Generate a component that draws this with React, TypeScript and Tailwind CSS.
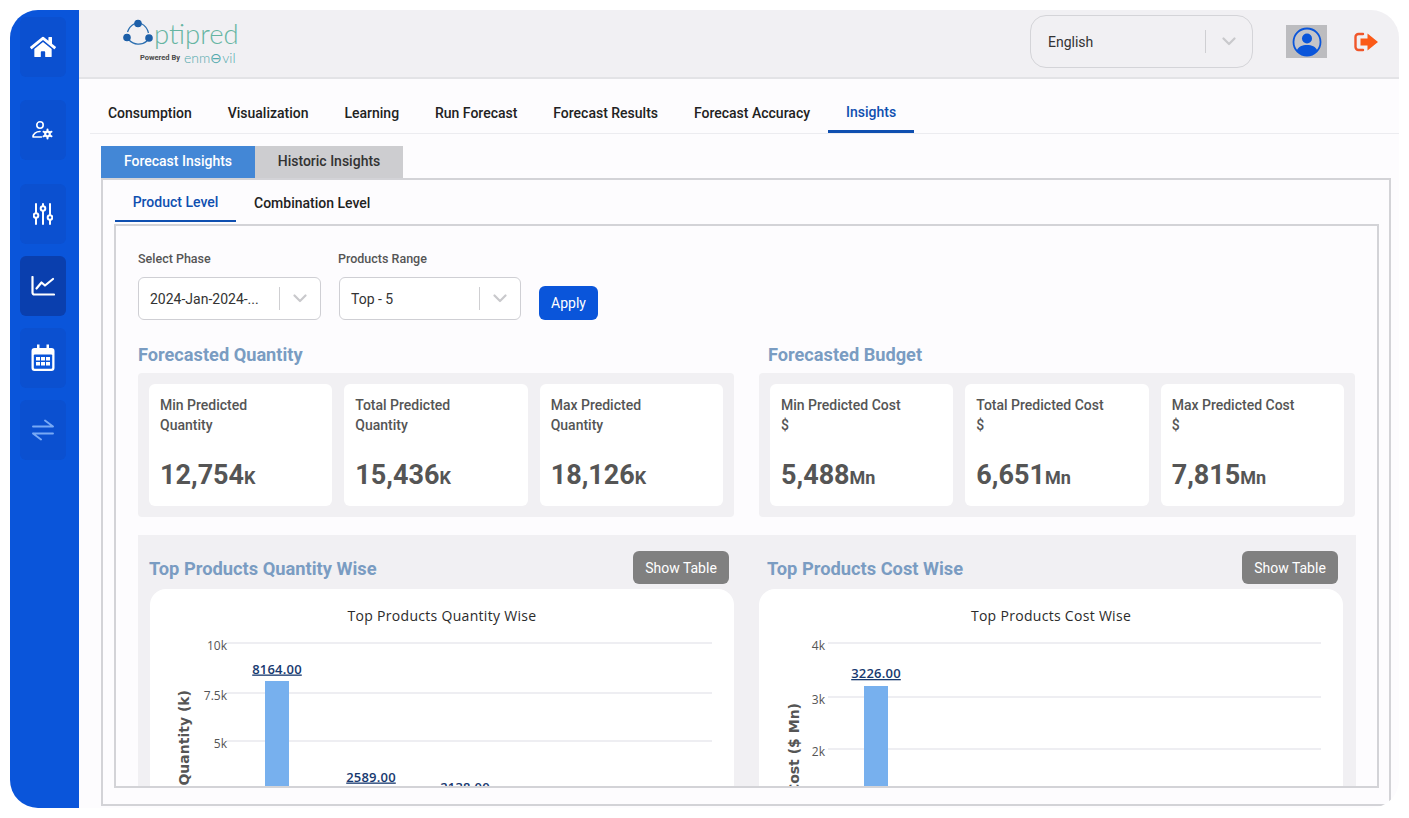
import React from "react";
import { FaHome } from "react-icons/fa";

const IconUserGear = () => (
  <svg width="22" height="19" viewBox="0 0 22 19" fill="none" stroke="white" strokeWidth="1.6" strokeLinecap="round">
    <circle cx="8" cy="4" r="3.2" />
    <path d="M1 16h8.500M1 16c0-3.200 3-5.500 7-5.500" />
    <circle cx="15.500" cy="13" r="2.300" strokeWidth="2.200" />
    <path d="M15.500 8.400v1M15.500 16.600v1M11.500 10.700l.9.500M18.600 14.800l.9.500M11.500 15.300l.9-.5M18.600 11.200l.9-.5" strokeWidth="2" />
  </svg>
);
const IconSliders = () => (
  <svg width="20" height="22" viewBox="0 0 20 22" fill="none" stroke="white" strokeWidth="2" strokeLinecap="round">
    <path d="M3 1v9M3 15v6M10 1v2M10 8v13M17 1v11M17 17v4" />
    <circle cx="3" cy="12.500" r="2.300" />
    <circle cx="10" cy="5.500" r="2.300" />
    <circle cx="17" cy="14.500" r="2.300" />
  </svg>
);
const IconChart = () => (
  <svg width="24" height="20" viewBox="0 0 24 20" fill="none" stroke="white" strokeWidth="2.200" strokeLinecap="round" strokeLinejoin="round">
    <path d="M1.500 1v15.500a2 2 0 0 0 2 2H23" />
    <path d="M5.500 12.500l5-6 3.500 3 8-6.500" />
  </svg>
);
const IconCalendar = () => (
  <svg width="24" height="28" viewBox="0 0 24 28">
    <path d="M6 0.500h2.500v3.500H15.500V0.500H18v3.500h2.500A3 3 0 0 1 23.500 7v17a3 3 0 0 1-3 3h-17a3 3 0 0 1-3-3V7a3 3 0 0 1 3-3H6z" fill="white" />
    <rect x="2.800" y="10.500" width="18.400" height="14.200" rx="1" fill="#0a55da" />
    {[5, 10, 15].flatMap((x) => [13, 18].map((y) => <rect key={x + "-" + y} x={x} y={y} width="4" height="3.500" fill="white" />))}
  </svg>
);
const IconSwap = () => (
  <svg width="22" height="22" viewBox="0 0 22 22" fill="none" stroke="#78a9f5" strokeWidth="1.900" strokeLinecap="round" strokeLinejoin="round">
    <path d="M1 7.500h20M13 1.500L21 7.500M21 14.500H1M9 20.500L1 14.500" />
  </svg>
);
const IconProfile = () => (
  <svg width="30" height="30" viewBox="0 0 30 30">
    <circle cx="15" cy="15" r="13.500" fill="#c4c4c8" stroke="#0a55da" strokeWidth="1.800" />
    <circle cx="15" cy="11.500" r="5" fill="#0a55da" />
    <path d="M4.800 23.500c1.500-4 5.500-5.500 10.200-5.500s8.700 1.500 10.200 5.500A13 13 0 0 1 15 28.500a13 13 0 0 1-10.200-5z" fill="#0a55da" />
  </svg>
);
const IconExit = () => (
  <svg width="26" height="22" viewBox="0 0 26 22">
    <path d="M10 3H5.500A3 3 0 0 0 2.500 6v10a3 3 0 0 0 3 3H10" fill="none" stroke="#f0562a" strokeWidth="2.400" strokeLinecap="round" />
    <path d="M7.500 7.500h7V2.500L25 11 14.500 19.500v-5h-7z" fill="#fb5a17" />
  </svg>
);
const Chevron = () => (
  <svg width="14" height="9" viewBox="0 0 14 9" fill="none" stroke="#c9c9cc" strokeWidth="2.200" strokeLinecap="round" strokeLinejoin="round">
    <path d="M1.500 1.500L7 7l5.500-5.500" />
  </svg>
);

const Logo = () => (
  <div className="flex w-[113px] flex-col">
    <div className="flex h-[30px] items-center">
      <svg width="31" height="28" viewBox="0 0 31 28" className="mb-[3px] shrink-0">
        <path d="M12 4.500A14 14 0 0 0 4.500 13M18 4.500A14 14 0 0 1 25.500 14M6 21A13 13 0 0 0 24 22" fill="none" stroke="#2c6fb0" strokeWidth="1.300" />
        <circle cx="15" cy="4.500" r="3.800" fill="#1d5fa8" />
        <circle cx="4" cy="18.500" r="3.800" fill="#1d5fa8" />
        <circle cx="26" cy="19" r="3.800" fill="#1d5fa8" />
      </svg>
      <span className="text-[27.500px] leading-[30px] font-light text-[#66b5a2] [font-family:Lato,sans-serif]">ptipred</span>
    </div>
    <div className="mt-[2px] flex h-[13px] items-center pl-[17px]">
      <span className="w-[44px] text-[7.500px] leading-3 font-bold whitespace-nowrap text-[#4a4a4a]">Powered By</span>
      <span className="text-[14px] leading-[13px] font-light text-[#52a9ad] [font-family:Lato,sans-serif]">enm⊖vil</span>
    </div>
  </div>
);

const NavItem = ({ children, active, cls }: { children: React.ReactNode; active?: boolean; cls: string }) => (
  <div className={`flex h-[60px] w-[46px] items-center justify-center rounded-md ${active ? "bg-[#0a3fae]" : "bg-[#0b50d0]"} ${cls}`}>{children}</div>
);

const Select = ({ value, w }: { value: string; w: string }) => (
  <div className={`flex h-[43px] items-center rounded-md border border-[#cfcfd4] bg-white pl-[11px] ${w}`}>
    <span className="flex-1 text-sm whitespace-nowrap text-[#333]">{value}</span>
    <span className="h-[23px] w-px bg-[#cfcfd2]" />
    <span className="flex w-[40px] justify-center"><Chevron /></span>
  </div>
);

const Stat = ({ l1, l2, value, unit }: { l1: string; l2: string; value: string; unit: string }) => (
  <div className="flex h-[122px] flex-1 flex-col rounded-md bg-white px-[11px] pt-[11px]">
    <div className="text-sm leading-5 font-medium text-[#555]">{l1}<br />{l2}</div>
    <div className="mt-[22px] flex items-baseline text-[#555]">
      <span className="text-[27px] leading-[36px] font-bold">{value}</span>
      <span className="text-lg leading-6 font-bold">{unit}</span>
    </div>
  </div>
);

const svgFont = "'Open Sans', sans-serif";

const Chart = ({ title, ticks, grid, x2, axis, axisX, axisY, bars, x1, tickX }: {
  title: string; ticks: string[]; grid: number[]; x1: number; x2: number; axis: string; axisX: number; axisY: number; tickX: number;
  bars: { x: number; top: number; label: string; ly: number }[];
}) => (
  <svg width="584" height="320" viewBox="0 0 584 320" className="block">
    <text x="292" y="32" textAnchor="middle" fontFamily={svgFont} fontSize="14" letterSpacing="0.3" fill="#2b2b2b">{title}</text>
    {grid.map((y, i) => (
      <g key={y}>
        <line x1={x1} x2={x2} y1={y} y2={y} stroke="#e9e9ee" strokeWidth="1.500" />
        <text x={tickX} y={y + 6.5} textAnchor="end" fontFamily={svgFont} fontSize="12" fill="#555">{ticks[i]}</text>
      </g>
    ))}
    <text transform={`translate(${axisX} ${axisY}) rotate(-90)`} textAnchor="end" fontFamily="'DejaVu Sans', sans-serif" fontWeight="700" fontSize="14" fill="#555">{axis}</text>
    {bars.map((b) => (
      <g key={b.label}>
        <rect x={b.x} y={b.top} width="24" height={320 - b.top} fill="#77b0ee" />
        <text x={b.x + 12} y={b.ly} textAnchor="middle" fontFamily={svgFont} fontWeight="600" fontSize="13" letterSpacing="0.2" textDecoration="underline" fill="#17396f">{b.label}</text>
      </g>
    ))}
  </svg>
);

export default function App() {
  return (
    <div className="h-[818px] w-[1409px] overflow-hidden bg-white p-[10px] [font-family:Roboto,sans-serif]">
      <div className="flex h-[798px] w-[1389px] overflow-hidden rounded-[28px]">
        <aside className="flex w-[69px] shrink-0 flex-col items-start bg-[#0a55da] pt-[7px] pl-[10px]">
          <NavItem cls=""><FaHome size={26} color="white" /></NavItem>
          <NavItem cls="mt-[23px]"><IconUserGear /></NavItem>
          <NavItem cls="mt-[24px]"><IconSliders /></NavItem>
          <NavItem cls="mt-[12px]" active><IconChart /></NavItem>
          <NavItem cls="mt-[12px]"><IconCalendar /></NavItem>
          <NavItem cls="mt-[12px]"><IconSwap /></NavItem>
        </aside>
        <main className="flex min-w-0 flex-1 flex-col bg-[#fdfcfe]">
          <header className="flex h-[69px] shrink-0 items-center border-b-2 border-[#e3e3e6] bg-[#f1f0f3] pb-1">
            <div className="ml-[44px] flex-1"><Logo /></div>
            <div className="flex h-[53px] w-[223px] items-center rounded-2xl border border-[#d4d4d8] pl-[17px]">
              <span className="flex-1 text-sm text-[#333]">English</span>
              <span className="h-[23px] w-px bg-[#cfcfd2]" />
              <span className="flex w-[46px] justify-center"><Chevron /></span>
            </div>
            <div className="ml-[33px] flex h-[33px] w-[41px] items-center justify-center bg-[#bcbcbf]"><IconProfile /></div>
            <div className="mr-[20px] ml-[26px]"><IconExit /></div>
          </header>
          <nav className="ml-[11px] flex h-[55px] shrink-0 items-end border-b border-[#ececf0] text-sm font-medium text-[#222]">
            {["Consumption", "Visualization", "Learning", "Run Forecast", "Forecast Results", "Forecast Accuracy"].map((t) => (
              <div key={t} className="flex h-[39px] items-start px-[17.950px] pt-[9px] whitespace-nowrap">{t}</div>
            ))}
            <div className="flex h-[39px] items-start border-b-[3px] border-[#0f4fb0] px-[18px] pt-[8px] text-[#0f4fb0]">Insights</div>
          </nav>
          <div className="mt-3 mr-2 mb-[2px] ml-[22px] flex min-h-0 flex-1 flex-col">
            <div className="flex h-[32px] shrink-0 text-sm font-medium">
              <div className="flex w-[154px] items-center justify-center bg-[#4387d6] pb-[2px] text-white">Forecast Insights</div>
              <div className="flex w-[148px] items-center justify-center bg-[#cdcdd0] pb-[2px] text-[#333]">Historic Insights</div>
            </div>
            <div className="flex min-h-0 flex-1 flex-col border-2 border-[#d3d3d7] pr-[10px] pb-[16px] pl-[11px]">
              <div className="flex h-[42px] shrink-0 text-sm font-medium">
                <div className="ml-px flex w-[121px] items-start justify-center border-b-[2.500px] border-[#0f4fb0] pt-[12px] text-[#0f4fb0]">Product Level</div>
                <div className="pt-[13px] pl-[18px] text-[#222]">Combination Level</div>
              </div>
              <section className="mt-[2px] min-h-0 flex-1 overflow-hidden border-2 border-[#d3d3d7] pt-[25px] pr-[21px] pl-[22px]">
                <div className="flex items-end">
                  <div className="mr-[18px]">
                    <div className="mb-[10px] text-[12.500px] leading-4 font-medium text-[#555]">Select Phase</div>
                    <Select value="2024-Jan-2024-..." w="w-[183px]" />
                  </div>
                  <div className="mr-[18px]">
                    <div className="mb-[10px] ml-[-1px] text-[12.500px] leading-4 font-medium text-[#555]">Products Range</div>
                    <Select value="Top - 5" w="w-[182px]" />
                  </div>
                  <button className="h-[34px] w-[59px] rounded-md bg-[#0a55da] text-sm text-white">Apply</button>
                </div>
                <div className="mt-[23px] flex gap-[25px]">
                  {[
                    { h: "Forecasted Quantity", s: [["Min Predicted", "Quantity", "12,754", "K"], ["Total Predicted", "Quantity", "15,436", "K"], ["Max Predicted", "Quantity", "18,126", "K"]] },
                    { h: "Forecasted Budget", s: [["Min Predicted Cost", "$", "5,488", "Mn"], ["Total Predicted Cost", "$", "6,651", "Mn"], ["Max Predicted Cost", "$", "7,815", "Mn"]] },
                  ].map((g, i) => (
                    <div key={g.h} className="w-[596px]">
                      <h2 className={`mb-[6px] text-[18.200px] leading-6 font-bold text-[#7a9cc2] ${i ? "pl-[9px]" : ""}`}>{g.h}</h2>
                      <div className="flex gap-3 rounded-sm bg-[#f1f0f3] p-[11px]">
                        {g.s.map((c) => <Stat key={c[0]} l1={c[0]} l2={c[1]} value={c[2]} unit={c[3]} />)}
                      </div>
                    </div>
                  ))}
                </div>
                <div className="mt-[18px] flex gap-[25px] bg-[#f1f0f3] px-3 pt-4">
                  <div className="w-[584px]">
                    <div className="mb-[5px] flex h-[33px] items-center justify-between pr-[5px]">
                      <h2 className="mt-[3px] ml-[-1px] text-[18.300px] font-bold text-[#7a9cc2]">Top Products Quantity Wise</h2>
                      <button className="h-[33px] w-[96px] rounded-md bg-[#808080] text-sm text-white">Show Table</button>
                    </div>
                    <div className="overflow-hidden rounded-2xl bg-white">
                      <Chart title="Top Products Quantity Wise" ticks={["10k", "7.5k", "5k", "2.5k"]} grid={[54, 104, 152, 200]} x1={76} x2={562} tickX={77} axis="Quantity (k)" axisX={39} axisY={101}
                        bars={[{ x: 115, top: 92, label: "8164.00", ly: 84.5 }, { x: 209, top: 200, label: "2589.00", ly: 192.5 }, { x: 303, top: 210, label: "2138.00", ly: 202.5 }]} />
                    </div>
                  </div>
                  <div className="w-[584px]">
                    <div className="mb-[5px] flex h-[33px] items-center justify-between pr-[5px] pl-[8px]">
                      <h2 className="mt-[3px] text-[18.300px] font-bold text-[#7a9cc2]">Top Products Cost Wise</h2>
                      <button className="h-[33px] w-[96px] rounded-md bg-[#808080] text-sm text-white">Show Table</button>
                    </div>
                    <div className="overflow-hidden rounded-2xl bg-white">
                      <Chart title="Top Products Cost Wise" ticks={["4k", "3k", "2k"]} grid={[54, 108, 160]} x1={69} x2={562} tickX={66} axis="Cost ($ Mn)" axisX={40} axisY={114}
                        bars={[{ x: 105, top: 97, label: "3226.00", ly: 89 }]} />
                    </div>
                  </div>
                </div>
              </section>
            </div>
          </div>
        </main>
      </div>
    </div>
  );
}
